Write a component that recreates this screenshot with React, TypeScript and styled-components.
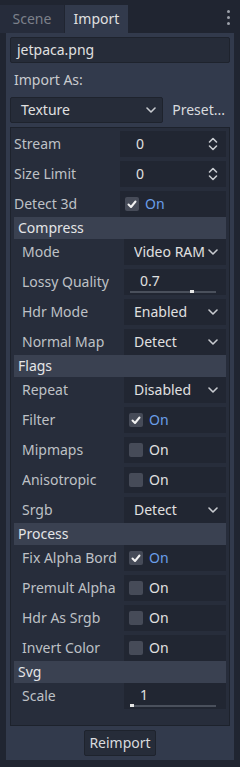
import React from "react";
import styled, { createGlobalStyle } from "styled-components";

const GlobalStyle = createGlobalStyle`
  html, body {
    margin: 0;
    padding: 0;
    background: #202531;
  }

  body {
    width: 240px;
    height: 767px;
    overflow: hidden;
    font-family: "Noto Sans", "DejaVu Sans", sans-serif;
    font-size: 14px;
    color: #e0e0e0;
  }
`;

type Prop =
  | { kind: "spin"; label: string; value: string }
  | { kind: "check"; label: string; checked: boolean }
  | { kind: "select"; label: string; value: string }
  | { kind: "slider"; label: string; value: string; ratio: number };

type Section = { title: string; props: Prop[] };

const TOP_PROPS: Prop[] = [
  { kind: "spin", label: "Stream", value: "0" },
  { kind: "spin", label: "Size Limit", value: "0" },
  { kind: "check", label: "Detect 3d", checked: true },
];

const SECTIONS: Section[] = [
  {
    title: "Compress",
    props: [
      { kind: "select", label: "Mode", value: "Video RAM" },
      { kind: "slider", label: "Lossy Quality", value: "0.7", ratio: 0.7 },
      { kind: "select", label: "Hdr Mode", value: "Enabled" },
      { kind: "select", label: "Normal Map", value: "Detect" },
    ],
  },
  {
    title: "Flags",
    props: [
      { kind: "select", label: "Repeat", value: "Disabled" },
      { kind: "check", label: "Filter", checked: true },
      { kind: "check", label: "Mipmaps", checked: false },
      { kind: "check", label: "Anisotropic", checked: false },
      { kind: "select", label: "Srgb", value: "Detect" },
    ],
  },
  {
    title: "Process",
    props: [
      { kind: "check", label: "Fix Alpha Bord", checked: true },
      { kind: "check", label: "Premult Alpha", checked: false },
      { kind: "check", label: "Hdr As Srgb", checked: false },
      { kind: "check", label: "Invert Color", checked: false },
    ],
  },
  {
    title: "Svg",
    props: [{ kind: "slider", label: "Scale", value: "1", ratio: 0 }],
  },
];

function Chevron() {
  return (
    <svg width="10" height="6" viewBox="0 0 10 6">
      <path
        d="M1 1 L5 5 L9 1"
        fill="none"
        stroke="#c8cbd0"
        strokeWidth="1.6"
        strokeLinecap="round"
        strokeLinejoin="round"
      />
    </svg>
  );
}

function SpinArrows() {
  return (
    <svg width="10" height="14" viewBox="0 0 10 14">
      <path
        d="M1.5 5 L5 1.5 L8.5 5 M1.5 9 L5 12.5 L8.5 9"
        fill="none"
        stroke="#c8cbd0"
        strokeWidth="1.6"
        strokeLinecap="round"
        strokeLinejoin="round"
      />
    </svg>
  );
}

function CheckMark() {
  return (
    <svg width="14" height="14" viewBox="0 0 14 14">
      <path
        d="M3.5 7.5 L6 10 L10.5 4.5"
        fill="none"
        stroke="#f2f2f2"
        strokeWidth="2"
        strokeLinecap="round"
        strokeLinejoin="round"
      />
    </svg>
  );
}

function Editor({ prop }: { prop: Prop }) {
  switch (prop.kind) {
    case "spin":
      return (
        <Field $padLeft={16}>
          <FieldText>{prop.value}</FieldText>
          <SpinArrows />
        </Field>
      );
    case "select":
      return (
        <Field $padLeft={10}>
          <FieldText>{prop.value}</FieldText>
          <Chevron />
        </Field>
      );
    case "check":
      return (
        <Field $padLeft={5}>
          <CheckBox>{prop.checked && <CheckMark />}</CheckBox>
          <CheckText $on={prop.checked}>On</CheckText>
        </Field>
      );
    case "slider":
      return (
        <SliderField>
          <SliderText>{prop.value}</SliderText>
          <Track>
            <Grabber style={{ left: `${prop.ratio * 100}%` }} />
          </Track>
        </SliderField>
      );
  }
}

function PropRow({ prop, nested }: { prop: Prop; nested: boolean }) {
  return (
    <Row $nested={nested}>
      <PropLabel>{prop.label}</PropLabel>
      <Editor prop={prop} />
    </Row>
  );
}

export default function App() {
  return (
    <>
      <GlobalStyle />
      <Dock>
        <TabBar>
          <Tab $active={false}>Scene</Tab>
          <Tab $active>Import</Tab>
          <MenuButton>
            <Dot />
            <Dot />
            <Dot />
          </MenuButton>
        </TabBar>
        <Panel>
          <FileField>jetpaca.png</FileField>
          <PlainLabel>Import As:</PlainLabel>
          <ImportRow>
            <OptionButton>
              <span>Texture</span>
              <Chevron />
            </OptionButton>
            <FlatButton>Preset...</FlatButton>
          </ImportRow>
          <Inspector>
            <Group>
              {TOP_PROPS.map((p) => (
                <PropRow key={p.label} prop={p} nested={false} />
              ))}
            </Group>
            {SECTIONS.map((s) => (
              <React.Fragment key={s.title}>
                <SectionHeader>{s.title}</SectionHeader>
                <Group>
                  {s.props.map((p) => (
                    <PropRow key={p.label} prop={p} nested />
                  ))}
                </Group>
              </React.Fragment>
            ))}
          </Inspector>
          <ButtonRow>
            <Button>Reimport</Button>
          </ButtonRow>
        </Panel>
      </Dock>
    </>
  );
}

const Dock = styled.div`
  display: flex;
  flex-direction: column;
  width: 240px;
  height: 767px;
  background: #202531;
`;

const TabBar = styled.div`
  display: flex;
  align-items: flex-end;
  height: 33px;
  position: relative;
`;

const Tab = styled.div<{ $active: boolean }>`
  display: flex;
  align-items: center;
  justify-content: center;

  height: 28px;
  width: ${(p) => (p.$active ? "63px" : "64px")};
  margin-left: ${(p) => (p.$active ? "1px" : "0")};
  padding-bottom: 1px;
  box-sizing: border-box;

  background: ${(p) => (p.$active ? "#323a4c" : "#262c3b")};
  color: ${(p) => (p.$active ? "#e0e0e0" : "#7c808a")};
  font-size: 14px;
`;

const MenuButton = styled.div`
  position: absolute;
  top: 10px;
  right: 10px;

  display: flex;
  flex-direction: column;
  gap: 3px;
`;

const Dot = styled.span`
  width: 3px;
  height: 3px;
  border-radius: 50%;
  background: #9da1aa;
`;

const Panel = styled.div`
  display: flex;
  flex-direction: column;
  gap: 4px;

  height: 727px;
  margin: 0 6px;
  padding: 4px;
  box-sizing: border-box;

  background: #323a4c;
`;

const FileField = styled.div`
  display: flex;
  align-items: center;

  height: 26px;
  padding: 0 0 1px 6px;
  box-sizing: border-box;

  background: #262c39;
  border: 1px solid #1e232d;
  border-radius: 2px;
  color: #e0e0e0;
`;

const PlainLabel = styled.div`
  display: flex;
  align-items: center;
  height: 26px;
  padding: 0 0 1px 4px;
  box-sizing: border-box;
  color: #c9cbcf;
`;

const ImportRow = styled.div`
  display: flex;
  align-items: center;
  height: 26px;
`;

const OptionButton = styled.div`
  display: flex;
  align-items: center;
  justify-content: space-between;

  width: 153px;
  height: 26px;
  padding: 0 6px 1px 10px;
  box-sizing: border-box;

  background: #262c39;
  border: 1px solid #1e232d;
  border-radius: 2px;
  color: #e0e0e0;
`;

const FlatButton = styled.div`
  flex: 1;
  text-align: right;
  padding: 0 5px 1px 0;
  color: #d9dbde;
`;

const Inspector = styled.div`
  flex: 1;
  display: flex;
  flex-direction: column;

  padding: 3px 3px 15px;
  box-sizing: border-box;

  background: #272d3b;
  border: 1px solid #1d222c;
`;

const Group = styled.div`
  display: flex;
  flex-direction: column;
  gap: 4px;
`;

const SectionHeader = styled.div`
  display: flex;
  align-items: center;

  height: 22px;
  padding: 0 0 1px 4px;
  box-sizing: border-box;

  background: #3a4151;
  color: #e4e5e7;
`;

const Row = styled.div<{ $nested: boolean }>`
  display: grid;
  grid-template-columns: 1fr 1fr;
  height: 26px;
  padding-left: ${(p) => (p.$nested ? "8px" : "0")};
`;

const PropLabel = styled.div`
  display: flex;
  align-items: center;
  padding-bottom: 1px;
  overflow: hidden;
  white-space: nowrap;
  color: #bec1c6;
`;

const Field = styled.div<{ $padLeft: number }>`
  display: flex;
  align-items: center;
  justify-content: space-between;

  padding: 0 8px 0 ${(p) => p.$padLeft}px;
  background: #212632;
`;

const FieldText = styled.span`
  flex: 1;
  padding-bottom: 1px;
  white-space: nowrap;
  overflow: hidden;
  color: #e0e0e0;
`;

const CheckBox = styled.span`
  display: flex;
  align-items: center;
  justify-content: center;

  width: 14px;
  height: 14px;
  border-radius: 2px;
  background: #464b58;
`;

const CheckText = styled.span<{ $on: boolean }>`
  flex: 1;
  margin-left: 6px;
  padding-bottom: 1px;
  color: ${(p) => (p.$on ? "#6a9ee9" : "#e0e0e0")};
`;

const SliderField = styled.div`
  display: flex;
  flex-direction: column;
  justify-content: center;
  padding: 0 10px 0 6px;
  background: #212632;
`;

const SliderText = styled.span`
  padding-left: 10px;
  line-height: 18px;
  color: #e0e0e0;
`;

const Track = styled.div`
  position: relative;
  height: 2px;
  margin-top: 1px;
  background: #4a505c;
`;

const Grabber = styled.span`
  position: absolute;
  top: -1px;
  width: 4px;
  height: 3px;
  background: #e6e6e6;
`;

const ButtonRow = styled.div`
  display: flex;
  justify-content: center;
`;

const Button = styled.div`
  display: flex;
  align-items: center;
  justify-content: center;

  width: 72px;
  height: 26px;
  padding-bottom: 1px;
  box-sizing: border-box;

  background: #262c39;
  border: 1px solid #1e232d;
  border-radius: 2px;
  color: #d9dbde;
`;
